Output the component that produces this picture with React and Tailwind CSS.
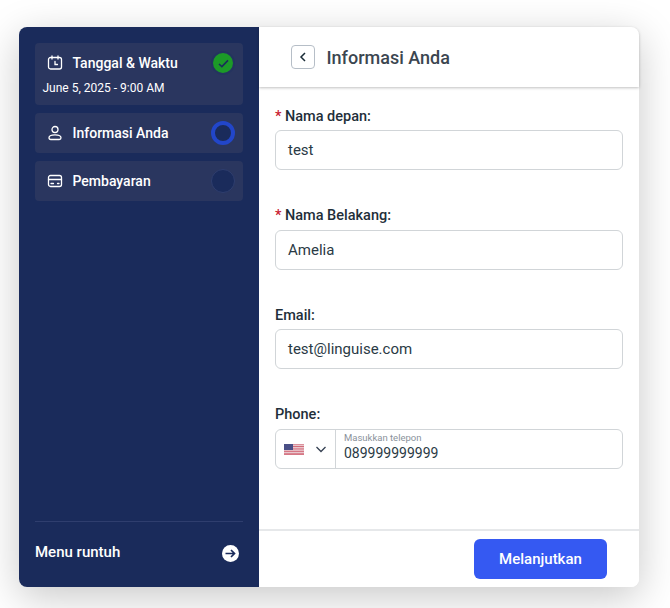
import React from "react";

function Field({ label, req, value, className, low }) {
  return (
    <div className={className}>
      <div className={(low ? "h-[21px] pt-[1px] " : "h-[20px] ") + "flex items-center text-[14.5px] font-medium leading-[20px] text-[#1f2f3a]"}>
        {req && <span className="text-[#c8202f] mr-[3.5px]">*</span>}
        {label}
      </div>
      <div className={(low ? "mt-[3px] " : "mt-[4px] ") + "h-[40px] rounded-[6px] border border-[#d1d5d8] bg-white flex items-center px-[12px] text-[15px] text-[#2a3a45]"}>
        {value}
      </div>
    </div>
  );
}

function Step({ icon, title, sub, status }) {
  return (
    <div className="rounded-[4px] bg-[#2a365f] px-[8px] py-[8px]">
      <div className="flex items-center h-[24px]">
        <div className="w-[29.5px] pl-[4px] flex items-center text-white">{icon}</div>
        <div className="text-[14px] font-medium text-white flex-1">{title}</div>
        {status}
      </div>
      {sub && <div className="text-[12px] leading-[16px] text-white mt-[5px] mb-[1px] ml-[-0.5px]">{sub}</div>}
    </div>
  );
}

export default function App() {
  return (
    <div className="w-[670px] h-[608px] bg-white pt-[27px] pl-[19px] overflow-hidden" style={{ fontFamily: "Roboto, sans-serif" }}>
      <div className="w-[620px] h-[560px] flex rounded-[8px] bg-white shadow-[0_10px_40px_rgba(0,0,0,0.22)]">
        <aside className="w-[240px] shrink-0 bg-[#1a2b5b] rounded-l-[8px] p-[16px] flex flex-col">
          <div className="flex flex-col gap-[8px]">
            <Step
              title="Tanggal & Waktu"
              sub="June 5, 2025 - 9:00 AM"
              icon={
                <svg width="16" height="16" viewBox="0 0 16 16" fill="none" stroke="currentColor" strokeWidth="1.3" strokeLinecap="round">
                  <rect x="1.5" y="2.5" width="13" height="11.5" rx="2" />
                  <path d="M5 1v3M11 1v3M8 6.5v3h2.5" />
                </svg>
              }
              status={
                <div className="w-[24px] h-[24px] rounded-full border-[2px] border-[#24345f] bg-[#1c9a28] flex items-center justify-center">
                  <svg width="11" height="9" viewBox="0 0 12 10" fill="none" stroke="#1a2b5b" strokeWidth="1.7">
                    <path d="M1 5.500 4.200 8.500 11 1.500" />
                  </svg>
                </div>
              }
            />
            <Step
              title="Informasi Anda"
              icon={
                <svg width="16" height="16" viewBox="0 0 16 16" fill="none" stroke="currentColor" strokeWidth="1.3">
                  <circle cx="8" cy="4.500" r="3" />
                  <path d="M2 12.800c0-2 2-3 6-3s6 1 6 3c0 1-.6 1.700-1.700 1.700H3.700C2.600 14.500 2 13.800 2 12.800Z" />
                </svg>
              }
              status={<div className="w-[24px] h-[24px] rounded-full border-[4px] border-[#2246c9] bg-[#1a2b5b]" />}
            />
            <Step
              title="Pembayaran"
              icon={
                <svg width="16" height="16" viewBox="0 0 16 16" fill="none" stroke="currentColor" strokeWidth="1.3" strokeLinecap="round">
                  <rect x="1.500" y="2.500" width="13" height="11" rx="2" />
                  <path d="M1.500 6.500h13M4 10.500h2.500M10.500 10.500h1.500" />
                </svg>
              }
              status={<div className="w-[24px] h-[24px] rounded-full border border-[#2f3e6e] bg-[#1a2b5b]" />}
            />
          </div>
          <div className="mt-auto border-t border-[#2f3e6e] h-[50px] pt-[20px] flex items-start justify-between pr-[4px]">
            <span className="text-[15px] leading-[20px] font-medium text-white">Menu runtuh</span>
            <div className="mt-[3px] w-[17px] h-[17px] rounded-full bg-white flex items-center justify-center">
              <svg width="11" height="9" viewBox="0 0 11 9" fill="none" stroke="#1a2b5b" strokeWidth="1.700">
                <path d="M0.500 4.500h9M6 1l3.500 3.500L6 8" />
              </svg>
            </div>
          </div>
        </aside>
        <main className="flex-1 flex flex-col min-w-0 rounded-r-[8px]">
          <header className="h-[60px] shrink-0 rounded-tr-[8px] flex items-center pl-[32px] gap-[12px] shadow-[0_1px_3px_rgba(0,0,0,0.25)] bg-white">
            <div className="w-[24px] h-[24px] rounded-[4px] border border-[#b6bec7] flex items-center justify-center">
              <svg width="8" height="10" viewBox="0 0 8 10" fill="none" stroke="#1a2c37" strokeWidth="1.500">
                <path d="M6 1 2 5l4 4" />
              </svg>
            </div>
            <h1 className="text-[18px] font-medium text-[#3b4650] ml-[-0.5px]">Informasi Anda</h1>
          </header>
          <div className="flex-1 px-[16px] pt-[19px]">
            <Field low req label="Nama depan:" value="test" />
            <Field req label="Nama Belakang:" value="Amelia" className="mt-[35px] pt-[1px]" />
            <Field low label="Email:" value="test@linguise.com" className="mt-[35px]" />
            <div className="mt-[35px]">
              <div className="h-[21px] pt-[1px] flex items-center text-[14.5px] font-medium text-[#1f2f3a]">Phone:</div>
              <div className="mt-[4px] h-[40px] rounded-[6px] border border-[#d1d5d8] flex items-stretch">
                <div className="w-[60px] border-r border-[#d1d5d8] flex items-center pl-[8px] gap-[11px]">
                  <svg width="20" height="11" viewBox="0 0 20 11">
                    <rect width="20" height="11" fill="#f3eef0" />
                    <path d="M0 .8h20M0 2.500h20M0 4.200h20M0 5.900h20M0 7.600h20M0 9.300h20M0 10.600h20" stroke="#c94a5c" strokeWidth="0.800" />
                    <rect width="9" height="6" fill="#4a4f86" />
                  </svg>
                  <svg width="12" height="7" viewBox="0 0 12 7" fill="none" stroke="#354052" strokeWidth="1.300">
                    <path d="M1.500 1 6 5.500 10.500 1" />
                  </svg>
                </div>
                <div className="flex-1 pl-[8px] pt-[2px]">
                  <div className="text-[9.5px] leading-[12px] text-[#8a929b]">Masukkan telepon</div>
                  <div className="text-[14px] leading-[17px] mt-[1px] text-[#2a3a45]">089999999999</div>
                </div>
              </div>
            </div>
          </div>
          <footer className="h-[58px] shrink-0 rounded-br-[8px] border-t-2 border-[#e6e8ea] bg-white flex justify-end items-start pt-[8px] pr-[32px]">
            <button className="w-[133px] h-[40px] rounded-[6px] bg-[#3559f2] text-white text-[15px] font-medium">
              Melanjutkan
            </button>
          </footer>
        </main>
      </div>
    </div>
  );
}
